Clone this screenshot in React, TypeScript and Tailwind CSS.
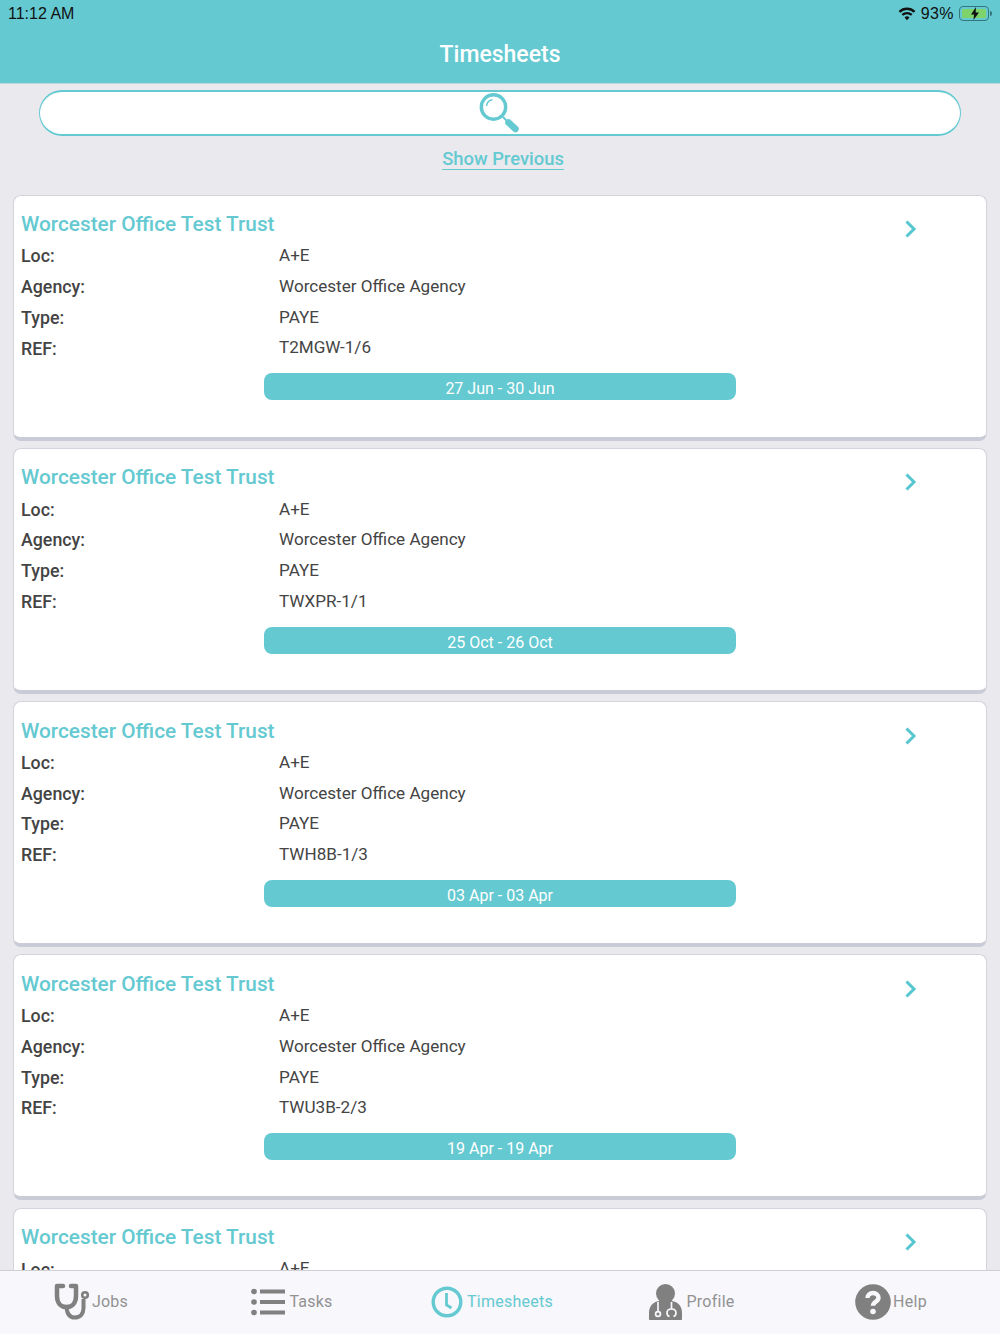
const sheets = [
  { ref: "T2MGW-1/6", dates: "27 Jun - 30 Jun" },
  { ref: "TWXPR-1/1", dates: "25 Oct - 26 Oct" },
  { ref: "TWH8B-1/3", dates: "03 Apr - 03 Apr" },
  { ref: "TWU3B-2/3", dates: "19 Apr - 19 Apr" },
  { ref: "", dates: "" },
];

const Row = ({ label, value }: { label: string; value: string }) => (
  <div className="flex h-[30.7px] items-center text-[#444]">
    <div className="-mt-[2px] w-[258px] text-[17.8px] font-medium leading-none">{label}</div>
    <div className="-mt-[3px] text-[17.1px] leading-none">{value}</div>
  </div>
);

const Card = ({ refCode, dates }: { refCode: string; dates: string }) => (
  <div className="relative h-[246px] shrink-0 rounded-lg border border-[#d3d5dc] border-b-[4px] border-b-[#c9ccd6] bg-white pl-[7px] pt-[14px]">
    <div className="flex h-[30px] items-center justify-between">
      <div className="text-[20.8px] font-medium leading-none text-[#64c9d1]">Worcester Office Test Trust</div>
      <svg width="14" height="18" viewBox="0 0 14 18" className="mr-[68px] mt-[9px]" fill="none" stroke="#56c6d0" strokeWidth="3">
        <path d="M2.5 1.5 10 9l-7.5 7.5" />
      </svg>
    </div>
    <div className="mt-[2.5px]">
      <Row label="Loc:" value="A+E" />
      <Row label="Agency:" value="Worcester Office Agency" />
      <Row label="Type:" value="PAYE" />
      <Row label="REF:" value={refCode} />
    </div>
    <div className="ml-[243px] mt-[8.5px] flex h-[27px] w-[472px] items-end justify-center rounded-lg bg-[#64c9d1] text-[16px] leading-[22px] text-white">
      {dates}
    </div>
  </div>
);

const Stethoscope = () => (
  <svg width="36" height="37" viewBox="0 0 36 37" fill="none" stroke="#808080" strokeWidth="4.5">
    <path d="M9 3H3v10c0 7 4 11 9.500 11S22 20 22 13V3h-5" strokeLinejoin="round" strokeLinecap="round" />
    <path d="M12.500 24c.5 6 3 10.500 8 10.500 6 0 9-4 9-9.500v-9" strokeWidth="4" />
    <circle cx="31" cy="12" r="2.800" strokeWidth="2.600" />
  </svg>
);

const ListIcon = () => (
  <svg width="34" height="28" viewBox="0 0 34 28" fill="#808080">
    <circle cx="3" cy="3.500" r="2.800" />
    <circle cx="3" cy="14" r="2.800" />
    <circle cx="3" cy="24.500" r="2.800" />
    <rect x="9" y="1.500" width="25" height="4" />
    <rect x="9" y="12" width="25" height="4" />
    <rect x="9" y="22.500" width="25" height="4" />
  </svg>
);

const ClockIcon = () => (
  <svg width="32" height="32" viewBox="0 0 32 32" fill="none" stroke="#64c9d1">
    <circle cx="16" cy="16" r="13.800" strokeWidth="3.400" />
    <path d="M15.500 7V19l5 3" strokeWidth="2.800" />
  </svg>
);

const DoctorIcon = () => (
  <svg width="33" height="36" viewBox="0 0 33 36" fill="#808080">
    <circle cx="16.500" cy="9.500" r="9.500" />
    <path d="M1 36c-.6 0-1-.4-1-1v-6c0-7 4-11 10-12h13c6 1 10 5 10 12v6c0 .6-.4 1-1 1Z" />
    <g fill="none" stroke="#f7f7fc" strokeWidth="1.700">
      <circle cx="9" cy="30" r="2.400" />
      <path d="M9 27.500V18" />
      <path d="M20.500 32.500c-1.500-.5-2.500-1.500-2.500-3.500 0-2.500 2-4 4.500-4s4.500 1.500 4.500 4c0 2-1 3-2.500 3.500" />
      <path d="M22.500 25V18" />
    </g>
  </svg>
);

const HelpIcon = () => (
  <svg width="36" height="36" viewBox="0 0 36 36">
    <circle cx="18" cy="18" r="17.800" fill="#808080" />
    <path d="M12.500 14c0-3 2.500-5 5.500-5s5.500 2 5.500 4.800c0 4-5.500 4-5.500 8" fill="none" stroke="#f7f7fc" strokeWidth="4.500" />
    <circle cx="18" cy="27.500" r="2.800" fill="#f7f7fc" />
  </svg>
);

const Tab = ({ icon, label, active, wide }: { icon: React.ReactNode; label: string; active?: boolean; wide?: boolean }) => (
  <div className={`flex w-[200px] items-center justify-center pb-[2px] text-[16px] tracking-[0.25px] ${wide ? "gap-[4px] pr-[16px]" : "gap-[2px] pr-[18px]"} ${active ? "text-[#64c9d1]" : "text-[#929292]"}`}>
    {icon}
    <span>{label}</span>
  </div>
);

export default function App() {
  return (
    <div className="flex h-screen flex-col overflow-hidden bg-[#e9e9ee] font-['Roboto',sans-serif]">
      {/* Status bar + title */}
      <header className="h-[83.5px] shrink-0 border-b border-[#b9d9dc] bg-[#64c9d1]">
        <div className="flex h-[27px] items-center justify-between px-[8px] font-['Liberation_Sans',sans-serif] text-[16px] text-[#111]">
          <span>11:12 AM</span>
          <div className="flex items-center gap-[5px]">
            <svg width="18" height="14" viewBox="0 0 20 15" fill="#111">
              <path d="M10 14.500 7.200 11.300a4 4 0 0 1 5.600 0Z" />
              <path d="M5.600 9.500 3.900 7.600a9 9 0 0 1 12.200 0l-1.700 1.900a6.500 6.500 0 0 0-8.800 0Z" />
              <path d="M2.500 6 .7 4.100a13.500 13.500 0 0 1 18.600 0L17.500 6a11 11 0 0 0-15 0Z" />
            </svg>
            <span className="tracking-[0.4px]">93%</span>
            <div className="flex items-center">
              <div className="relative flex h-[15px] w-[30px] items-center rounded-[4px] border border-[#35767c] p-[2px]">
                <div className="h-full w-[25px] rounded-[1px] bg-[#7ed46a]" />
                <svg width="10" height="13" viewBox="0 0 10 13" fill="#111" className="absolute left-[10px] top-[0px]">
                  <path d="M6 0 1 7.500h3L3.500 13 9 5.500H5.700Z" />
                </svg>
              </div>
              <div className="ml-[1px] h-[5px] w-[2px] rounded-r-sm bg-[#35767c]" />
            </div>
          </div>
        </div>
        <div className="mt-[15px] text-center text-[23px] font-medium leading-[26px] text-white">Timesheets</div>
      </header>

      <main className="min-h-0 flex-1 overflow-hidden">
        <div className="mx-[39px] mt-[6.5px] flex h-[46px] items-center justify-center rounded-[23px] border border-y-2 border-[#64c9d1] bg-white">
          <svg width="42" height="42" viewBox="0 0 42 42" fill="none" stroke="#64c9d1">
            <circle cx="14.500" cy="15" r="12.200" strokeWidth="3.400" />
            <path d="M7.500 14c.3-3.500 2.500-5.800 6-6.300" strokeWidth="1.500" />
            <path d="M24 25l5 5" strokeWidth="2" />
            <path d="M29.500 30.500l7 6.500" strokeWidth="6.500" strokeLinecap="round" />
          </svg>
        </div>
        <div className="mt-[11px] pl-[6px] text-center text-[18.4px] font-medium leading-[24px] text-[#64c9d1] underline underline-offset-[4px]">
          Show Previous
        </div>
        <div className="mx-[13px] mt-[23.5px] flex flex-col gap-[7.3px]">
          {sheets.map((s, i) => (
            <Card key={i} refCode={s.ref} dates={s.dates} />
          ))}
        </div>
      </main>

      <nav className="flex h-[64px] shrink-0 border-t border-[#cfcfd4] bg-[#f7f7fc]">
        <Tab icon={<Stethoscope />} label="Jobs" />
        <Tab icon={<ListIcon />} label="Tasks" wide />
        <Tab icon={<ClockIcon />} label="Timesheets" active wide />
        <Tab icon={<DoctorIcon />} label="Profile" wide />
        <Tab icon={<HelpIcon />} label="Help" />
      </nav>
    </div>
  );
}
